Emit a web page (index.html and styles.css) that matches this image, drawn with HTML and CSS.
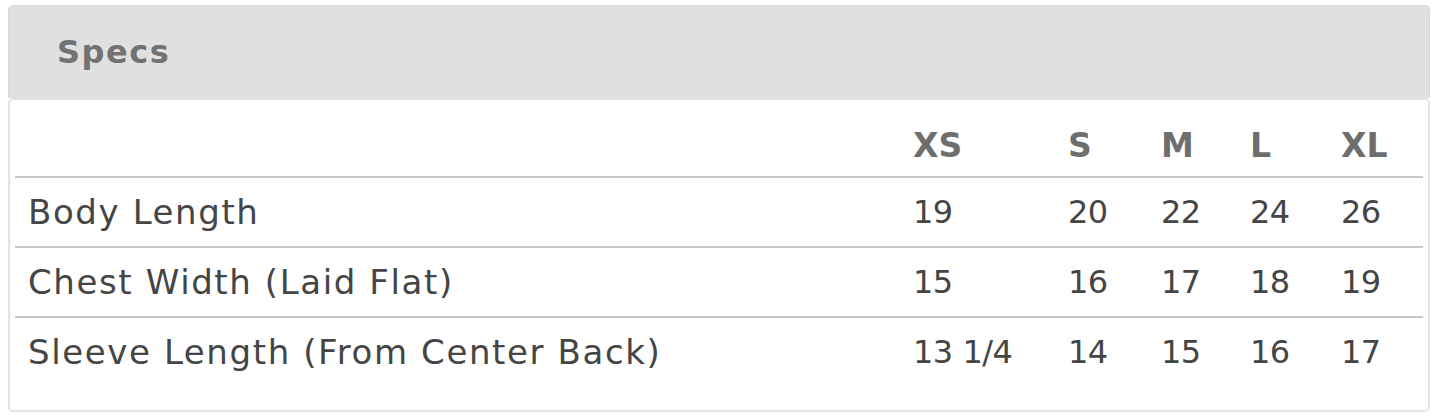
FILE: index.html
```html
<!DOCTYPE html>
<html lang="en">
<head>
<meta charset="utf-8">
<title>Specs</title>
<link rel="stylesheet" href="styles.css">
</head>
<body>
<div class="panel">
  <div class="panel-heading">Specs</div>
  <div class="panel-body">
    <table class="specs">
      <colgroup>
        <col class="c-label">
        <col class="c-xs">
        <col class="c-s">
        <col class="c-m">
        <col class="c-l">
        <col class="c-xl">
      </colgroup>
      <thead>
        <tr><th></th><th>XS</th><th>S</th><th>M</th><th>L</th><th>XL</th></tr>
      </thead>
      <tbody>
        <tr><td class="label">Body Length</td><td>19</td><td>20</td><td>22</td><td>24</td><td>26</td></tr>
        <tr><td class="label">Chest Width (Laid Flat)</td><td>15</td><td>16</td><td>17</td><td>18</td><td>19</td></tr>
        <tr><td class="label">Sleeve Length (From Center Back)</td><td>13 1/4</td><td>14</td><td>15</td><td>16</td><td>17</td></tr>
      </tbody>
    </table>
  </div>
</div>
</body>
</html>
```
FILE: styles.css
```css
html, body {
  margin: 0;
  padding: 0;
  background: #ffffff;
}
body {
  padding: 5px 10px 0 8px;
  font-family: "DejaVu Sans", "Open Sans", sans-serif;
}
.panel {
  border-radius: 5px;
}
.panel-heading {
  height: 93px;
  box-sizing: border-box;
  background: #e0e0e0;
  border: 1px solid #d9d9d9;
  border-bottom: none;
  border-radius: 5px 5px 0 0;
  padding-left: 48px;
  display: flex;
  align-items: center;
  font-size: 32px;
  font-weight: 700;
  letter-spacing: 1.5px;
  color: #727272;
}
.panel-body {
  border: 2px solid #e3e3e3;
  border-radius: 5px;
  padding: 5px 5px 24px 5px;
}
.specs {
  width: 100%;
  border-collapse: collapse;
  color: #454545;
}
.c-label { width: 885px; }
.c-xs { width: 155px; }
.c-s { width: 93px; }
.c-m { width: 89px; }
.c-l { width: 91px; }
.c-xl { width: auto; }
.specs th,
.specs td {
  text-align: left;
  padding: 14px 0 14px 13px;
  line-height: 40px;
  font-size: 32px;
  letter-spacing: -0.5px;
  white-space: nowrap;
}
.specs th {
  padding-top: 21px;
  padding-bottom: 10px;
  font-weight: 700;
  color: #6e6e6e;
  font-size: 33px;
  letter-spacing: 0;
  border-bottom: 2px solid #c9c9c9;
}
.specs td {
  font-weight: 400;
}
.specs td.label {
  font-size: 34px;
  letter-spacing: 1.6px;
}
.specs tbody tr + tr td {
  border-top: 2px solid #c9c9c9;
}
```
